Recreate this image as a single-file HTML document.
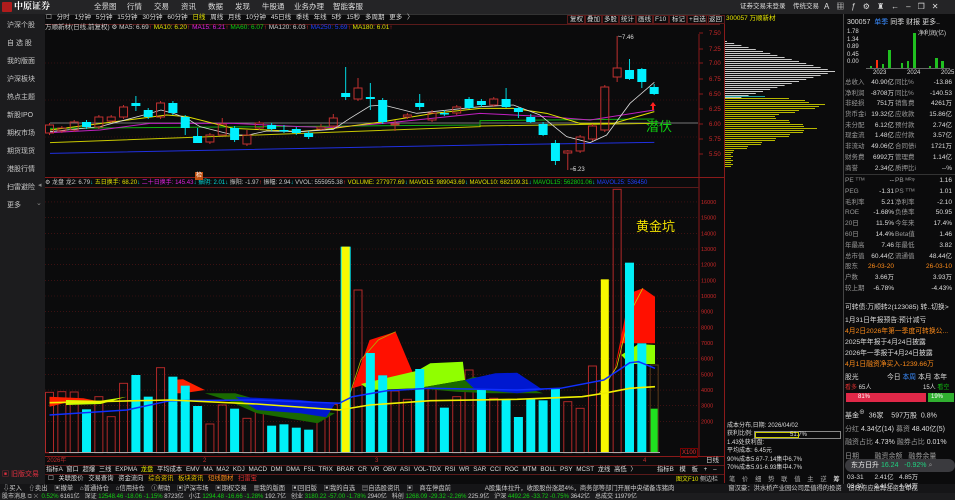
<!DOCTYPE html>
<html><head><meta charset="utf-8">
<style>
*{margin:0;padding:0;box-sizing:border-box}
body{width:955px;height:500px;overflow:hidden;background:#0b0b0c;font-family:"Liberation Sans","Noto Sans CJK SC",sans-serif;font-size:7px;color:#ccc;position:relative}
.a{position:absolute;white-space:nowrap;line-height:1}
#top{position:absolute;left:0;top:0;width:955px;height:14px;background:#242426}
#side{position:absolute;left:0;top:14px;width:45px;height:486px;background:#1c1c1e}
.si{position:absolute;left:7px;font-size:7px;color:#c8c8c8}
.tb{position:absolute;top:15px;height:9px;font-size:6.5px;color:#ddd;border:1px solid #5a1a1a;padding:0 2px;line-height:8px}
.rp{position:absolute;font-size:7px;color:#ddd;white-space:nowrap}
.g{color:#999}
.o{color:#ff8c1a}
svg{position:absolute;left:0;top:0}
</style></head><body>
<div id="top"></div>
<div class="a" style="left:2px;top:2px;width:10px;height:10px;background:#b01c1c;border-radius:1px"></div>
<div class="a" style="left:14px;top:2px;font-size:9px;color:#fff;font-weight:bold;font-family:'Liberation Serif','Noto Serif CJK SC',serif">中原证券</div>
<div class="a" style="left:94px;top:3px;font-size:7.5px;color:#ddd">全景图</div>
<div class="a" style="left:127px;top:3px;font-size:7.5px;color:#ddd">行情</div>
<div class="a" style="left:154px;top:3px;font-size:7.5px;color:#ddd">交易</div>
<div class="a" style="left:181px;top:3px;font-size:7.5px;color:#ddd">资讯</div>
<div class="a" style="left:208px;top:3px;font-size:7.5px;color:#ddd">数据</div>
<div class="a" style="left:235px;top:3px;font-size:7.5px;color:#ddd">发现</div>
<div class="a" style="left:262px;top:3px;font-size:7.5px;color:#ddd">牛股通</div>
<div class="a" style="left:294px;top:3px;font-size:7.5px;color:#ddd">业务办理</div>
<div class="a" style="left:333px;top:3px;font-size:7.5px;color:#ddd">智能客服</div>
<div class="a" style="left:740px;top:4px;font-size:6.5px;color:#ddd">证券交易未登录</div>
<div class="a" style="left:793px;top:4px;font-size:6.5px;color:#ddd">传统交易</div>
<div class="a" style="left:824px;top:3px;font-size:8px;color:#ddd;letter-spacing:7px">A▦ƒ⚙♜←–❐✕</div>

<div id="side"></div>
<div class="si" style="top:20px">沪深个股</div>
<div class="si" style="top:38px">自 选 股</div>
<div class="si" style="top:56px">我的版面</div>
<div class="si" style="top:74px">沪深板块</div>
<div class="si" style="top:92px">热点主题</div>
<div class="si" style="top:110px">新股IPO</div>
<div class="si" style="top:128px">期权市场</div>
<div class="si" style="top:146px">期货现货</div>
<div class="si" style="top:164px">港股行情</div>
<div class="si" style="top:182px">扫雷避险</div>
<div class="si" style="top:200px">更多</div>
<div class="a" style="left:38px;top:182px;color:#888">◂</div>
<div class="a" style="left:36px;top:200px;color:#888">⌄</div>
<div class="a" style="left:2px;top:471px;color:#e03040;font-size:7px">▣ 旧版交易</div>

<svg id="sv" width="955" height="500"></svg>

<div class="a" style="left:46px;top:15px;font-size:6.5px;color:#ddd;word-spacing:3px">☐ 分时 1分钟 5分钟 15分钟 30分钟 60分钟 <span style="color:#e8e800">日线</span> 周线 月线 10分钟 45日线 季线 年线 5秒 15秒 多周期 更多 〉</div>
<div class="tb" style="left:567px">复权</div><div class="tb" style="left:584px">叠加</div><div class="tb" style="left:601px">多股</div><div class="tb" style="left:618px">统计</div><div class="tb" style="left:635px">画线</div><div class="tb" style="left:652px">F10</div><div class="tb" style="left:669px">标记</div><div class="tb" style="left:686px">+自选</div><div class="tb" style="left:706px">返回</div>
<div class="a" style="left:726px;top:16px;font-size:6.5px;color:#e8e800">300057 万顺新材</div>
<div class="a" style="left:45px;top:25px;font-size:6.5px;color:#ccc">万顺新材(日线,前复权) ⚙ MA5: 6.69<span style="color:#f33">↑</span> <span style="color:#e0e000">MA10: 6.20<span style="color:#f33">↑</span></span> <span style="color:#e020e0">MA15: 6.21<span style="color:#f33">↑</span></span> <span style="color:#10d010">MA60: 6.07<span style="color:#f33">↑</span></span> <span style="color:#ccc">MA120: 6.03<span style="color:#f33">↑</span></span> <span style="color:#2040ff">MA250: 5.69<span style="color:#f33">↑</span></span> <span style="color:#e0e000">MA180: 6.01<span style="color:#f33">↑</span></span></div>
<div class="a" style="left:45px;top:180px;font-size:6px;color:#ccc">⚙ 龙盘 龙2: 6.79<span style="color:#0dd">↓</span> <span style="color:#e0e000">五日换手: 68.20<span style="color:#0dd">↓</span></span> <span style="color:#e020e0">二十日换手: 145.43<span style="color:#0dd">↓</span></span> <span style="color:#0dd">振阴: 2.01↓</span> 振阳: -1.97<span style="color:#f33">↑</span> 振幅: 2.94<span style="color:#0dd">↓</span> VVOL: 555955.38<span style="color:#f33">↑</span> <span style="color:#e0e000">VOLUME: 277977.69<span style="color:#0dd">↓</span> MAVOL5: 989043.69<span style="color:#0dd">↓</span> MAVOL10: 682109.31<span style="color:#0dd">↓</span></span> <span style="color:#10d010">MAVOL15: 562801.06<span style="color:#0dd">↓</span></span> <span style="color:#2040ff">MAVOL25: 536450</span></div>
<div class="a" style="left:622px;top:35px;font-size:6px;color:#ddd">7.46</div>
<div class="a" style="left:573px;top:167px;font-size:6px;color:#ddd">5.23</div>
<div class="a" style="left:646px;top:120px;font-size:13px;color:#10d010">潜伏</div>
<div class="a" style="left:636px;top:220px;font-size:13px;color:#f0e000">黄金坑</div>
<div class="a" style="left:195px;top:172px;font-size:6px;color:#fff;background:#c05010;padding:1px">检</div>
<div class="a" style="left:680px;top:448px;font-size:6px;color:#e03030;border:1px solid #700;padding:1px">X100</div>
<div class="a" style="left:47px;top:458px;font-size:6px;color:#c03030">2026年</div>
<div class="a" style="left:203px;top:458px;font-size:6px;color:#c03030">2</div>
<div class="a" style="left:375px;top:458px;font-size:6px;color:#c03030">3</div>
<div class="a" style="left:643px;top:458px;font-size:6px;color:#c03030">4</div>
<div class="a" style="left:706px;top:458px;font-size:6.5px;color:#ddd">日线</div>
<div class="a" style="left:46px;top:467px;font-size:6.3px;color:#ddd;word-spacing:2px">指标A 窗口 超爆 三线 EXPMA <span style="color:#e8e800">龙盘</span> 平均成本 EMV MA MA2 KDJ MACD DMI DMA FSL TRIX BRAR CR VR OBV ASI VOL-TDX RSI WR SAR CCI ROC MTM BOLL PSY MCST 龙线 高低 〉</div>
<div class="a" style="left:657px;top:467px;font-size:6.3px;color:#ddd;word-spacing:4px">指标B 模 板 + –</div>
<div class="a" style="left:48px;top:476px;font-size:6.3px;color:#ddd;word-spacing:3px">☐ 关联股价 交易查询 资金流向 <span style="color:#e8c000">综合资讯 板块资讯</span> <span style="color:#ff8c1a">短线题材</span> <span style="color:#e03030">扫雷宝</span></div>
<div class="a" style="left:676px;top:477px;font-size:6px;color:#e8e800">图文F10 <span style="color:#ccc">侧边栏</span></div>
<div class="a" style="left:729px;top:477px;font-size:6.3px;color:#aaa;word-spacing:5px">笔 价 细 势 联 值 主 逆 <span style="color:#fff">筹</span></div>
<div class="a" style="left:0;top:484px;width:955px;height:9px;background:#151517"></div>
<div class="a" style="left:3px;top:486px;font-size:6.3px;color:#ccc;word-spacing:5px">⇩买入 ⇧卖出 ▣撤单 ⌂普通持仓 ⌂信用持仓 ⓘ帮助 ▣沪深市场 ▣期权交易 ▦我的版面 ▣回旧版 ▣我的自选 ▤自选股资讯 ▣ 商在停盘前 &nbsp;&nbsp;&nbsp;&nbsp;A股集体拉升，收股股份涨超4%，商务部等部门开展中央储备冻猪肉 &nbsp;&nbsp;&nbsp;&nbsp;&nbsp;&nbsp; 窗汉豪：洪水桥产业园公司是值得的投资 但政府应推再注资金审视 &nbsp;&nbsp;&nbsp;&nbsp; 特朗普怒马</div>
<div class="a" style="left:0;top:493px;width:955px;height:7px;background:#1c1c1e"></div>
<div class="a" style="left:2px;top:494px;font-size:6px;color:#ccc">股市消息 <span style="color:#888">⧉ ✕</span> &nbsp;<span style="color:#10d010">0.52%</span> 6161亿 &nbsp; 深证 <span style="color:#10d010">12548.46 -18.06 -1.15%</span> 8723亿 &nbsp; 小江 <span style="color:#10d010">1294.48 -16.66 -1.28%</span> 192.7亿 &nbsp; 创业 <span style="color:#10d010">3180.22 -57.00 -1.78%</span> 2940亿 &nbsp; 科创 <span style="color:#10d010">1268.09 -29.32 -2.26%</span> 225.9亿 &nbsp; 沪深 <span style="color:#10d010">4492.26 -33.72 -0.75%</span> 3642亿 &nbsp; 总成交 11979亿</div>

<div class="a" style="left:727px;top:422px;font-size:6px;color:#ddd;line-height:8.4px">成本分布,日期: 2026/04/02<br>获利比例:<br>1.43处获利盘:<br>平均成本: 6.45元<br>90%成本5.67-7.14集中6.7%<br>70%成本5.91-6.93集中4.7%</div>
<div class="a" style="left:754px;top:431px;width:87px;height:8px;border:1px solid #888"></div>
<div class="a" style="left:755px;top:432px;width:44px;height:6px;border:1px solid #cc0"></div>
<div class="a" style="left:790px;top:432px;font-size:6px;color:#ddd">51.7%</div>

<div class="rp" style="left:847px;top:17px">300057 <span style="color:#3a8cff">&nbsp;单季</span> 同季 财报 更多..</div>
<div class="rp g" style="left:847px;top:29px;font-size:6px;line-height:7.5px;color:#ddd">1.78<br>1.34<br>0.89<br>0.45<br>0.00</div>
<div class="rp" style="left:918px;top:28px;font-size:6px">净利润(亿)</div>
<div class="rp" style="left:873px;top:70px;font-size:6px;word-spacing:19px">2023 2024 2025</div>
<div id="fin" class="rp" style="left:845px;top:78px;width:108px;font-size:6.5px;line-height:10.7px"></div>
<div class="a" style="left:845px;top:174px;width:110px;height:1px;background:#333"></div>
<div id="fin2" class="rp" style="left:845px;top:176px;width:108px;font-size:6.5px;line-height:10.8px"></div>
<div class="rp" style="left:845px;top:302px;width:110px;font-size:6.8px;line-height:11px">
<div>可转债:万顺转2(123085) 转..切换&gt;</div>
<div style="margin-top:2px">1月31日年报预告:预计减亏</div>
<div class="o">4月2日2026年第一季度可转换公...</div>
<div>2025年年报于4月24日披露</div>
<div>2026年一季报于4月24日披露</div>
<div class="o">4月1日融资净买入-1239.66万</div>
<div style="margin-top:2px;position:relative;height:11px"><span>股光</span><span style="position:absolute;left:42px">今日 <span style="color:#3a8cff">本周</span> 本月 本年</span></div>
<div style="font-size:6px;position:relative;height:10px"><span style="color:#e03030">看多</span> 65人<span style="position:absolute;left:78px">15人 <span style="color:#10c010">看空</span></span></div>
</div>
<div class="a" style="left:846px;top:393px;width:80px;height:9px;background:#e02848;color:#fff;font-size:6px;line-height:9px;padding-left:12px">81%</div>
<div class="a" style="left:928px;top:393px;width:26px;height:9px;background:#30b030;color:#fff;font-size:6px;line-height:9px;padding-left:3px">19%</div>
<div class="rp" style="left:845px;top:407px;width:108px;font-size:7px;line-height:13.5px">
<div>基金<sup>⊕</sup> &nbsp;36家 &nbsp;&nbsp;&nbsp;597万股 &nbsp;0.8%</div>
<div><span class="g">分红</span> 4.34亿(14) <span class="g">募资</span> 48.40亿(5)</div>
<div><span class="g">融资占比</span> 4.73% <span class="g">融券占比</span> 0.01%</div>
<div class="g">日期 &nbsp;&nbsp;&nbsp;&nbsp;&nbsp;&nbsp;&nbsp;融资余额 &nbsp;&nbsp;融券余量</div>
</div>
<div class="a" style="left:845px;top:459px;width:110px;height:13px;background:#3a3a3e;border-radius:7px;font-size:7px;line-height:13px;color:#eee;padding-left:6px">东方日升 <span style="color:#20d080">16.24 &nbsp;&nbsp;-0.92%</span> <span style="color:#999">⌕</span></div>
<div class="rp" style="left:847px;top:473px;font-size:6.5px;line-height:9px">03-31 &nbsp;&nbsp;&nbsp;&nbsp;&nbsp;2.41亿 &nbsp;&nbsp;4.85万<br>03-30 &nbsp;&nbsp;&nbsp;&nbsp;&nbsp;2.41亿 &nbsp;&nbsp;4.94万</div>

<script>
var S='';
function r(x,y,w,h,f,s){S+='<rect x="'+x+'" y="'+y+'" width="'+w+'" height="'+h+'" fill="'+f+'"'+(s?' stroke="'+s+'" stroke-width="1"':'')+'/>';}
function l(x1,y1,x2,y2,c,w,d){S+='<line x1="'+x1+'" y1="'+y1+'" x2="'+x2+'" y2="'+y2+'" stroke="'+c+'" stroke-width="'+(w||1)+'"'+(d?' stroke-dasharray="'+d+'"':'')+'/>';}
function pl(pts,c,w){S+='<polyline points="'+pts.map(p=>p.join(',')).join(' ')+'" fill="none" stroke="'+c+'" stroke-width="'+(w||1)+'"/>';}
function pg(pts,f){S+='<polygon points="'+pts.map(p=>p.join(',')).join(' ')+'" fill="'+f+'"/>';}
function t(x,y,s,c,fs){S+='<text x="'+x+'" y="'+y+'" fill="'+c+'" font-size="'+(fs||6)+'" font-family="Liberation Sans">'+s+'</text>';}
l(45,14.5,720,14.5,'#333');
l(45,24.5,720,24.5,'#5a1a1a');
l(699,34,699,457,'#8a1a1a');
l(724.5,24,724.5,483,'#8a1a1a');
l(843.5,14,843.5,484,'#444');
l(45,177.5,724,177.5,'#8a1a1a');
l(45,187.5,699,187.5,'#5a1a1a');
l(45,456.5,724,456.5,'#8a1a1a');
l(45,465.5,724,465.5,'#5a1a1a');
l(45,474.5,724,474.5,'#5a1a1a');
var pa=[[7.50,33],[7.25,49],[7.00,63],[6.75,79],[6.50,94],[6.25,109],[6.00,124],[5.75,139],[5.50,154]];
pa.forEach(p=>{t(709,p[1]+2,p[0].toFixed(2),'#c82828',6);l(699,p[1],703,p[1],'#8a1a1a');});
[63,100,137].forEach(y=>l(45,y,699,y,'#5a1515',0.6,'1,2'));
function z1(a){return a.map(p=>[p[0]/3,p[1]/3]);}
function z2(a){return a.map(p=>[480+p[0]/3,p[1]/3]);}
pl([[50,123],[698,123]],'#9a9a9a',0.8);
pl(z1([[150,428],[1440,380]]).concat(z2([[0,378],[523,370]])),'#c8c800',1);
pl(z1([[150,460],[1440,435]]).concat(z2([[0,435],[523,427]])),'#2030e0',1);
pl(z1([[150,385],[1440,375]]).concat(z2([[0,362],[523,357]])),'#10b010',1);
pl(z1([[150,398],[300,390],[450,370],[700,370],[900,380],[1000,382],[1150,370],[1440,340]]).concat(z2([[200,350],[330,360],[523,330]])),'#c020c0',1);
pl(z1([[150,390],[500,345],[560,350],[700,385],[900,395],[1000,385],[1150,365],[1300,340],[1440,325]]).concat(z2([[100,325],[200,340],[300,370],[400,370],[523,335]])),'#e0e000',1);
pl(z1([[150,395],[300,380],[450,340],[483,330],[520,340],[560,355],[600,380],[700,405],[745,405],[800,393],[900,395],[1000,388],[1050,355],[1110,318],[1150,315],[1250,340],[1440,320]]).concat(z2([[0,320],[100,315],[180,345],[260,410],[330,428],[380,405],[450,310],[523,247]])),'#ddd',0.8);
var C=[['u',125,133],['u',128,131],['u',122,130],['d',122,127],['u',117,127],['u',117,121],['u',107,117],['d',103,106,96,111],['d',110,117],['u',103,117],['d',103,113],['d',117,128,115,135],['d',136,143,128,143],['u',135,142],['u',124,135,118,135],['d',128,140],['u',135,144,130,146],['u',123,128],['d',125,129],['d',130,131,125,133],['d',129,133],['d',133,137],['u',127,129,124,130],['u',118,126,114,128],['d',93,97,67,100],['u',88,99,78,101],['d',97,99,83,110],['d',100,122],['u',124,125,120,131],['u',115,117],['d',103,107,94,110],['u',113,120,110,122],['d',113,114,110,116],['u',107,113],['d',99,108,97,109],['d',101,105],['u',99,105],['d',99,107,88,108],['d',108,112,107,118],['d',117,122,114,123],['d',124,135,122,136],['d',143,161,140,165],['u',151,153,150,170],['u',137,151],['u',126,139],['u',87,130],['u',68,77,36,82],['d',70,79,59,80],['d',69,82,68,88],['d',87,94,84,95]];
C.forEach((c,i)=>{var x=49.5+12.34*i;var wt=c[3]||c[1]-2,wb=c[4]||c[2]+2;
 if(c[0]=='u'){l(x,wt,x,c[1],'#c03030');l(x,c[2],x,wb,'#c03030');r(x-4,c[1],8,Math.max(1,c[2]-c[1]),'none','#c03030');}
 else{l(x,wt,x,wb,'#00d8e0');r(x-4.5,c[1],9,Math.max(1.5,c[2]-c[1]),'#00f0ff');}});
l(618,36,622,37,'#ddd',0.6);l(570,169,575,169,'#ddd',0.6);
pg([[653,102],[650,106],[652,106],[652,110],[654,110],[654,106],[656,106]],'#ff2020');
for(var y=37;y<=97;y+=2){var d=Math.abs(y-71);var L=Math.max(8,118-d*3.6)+(y%4?-8:0);r(725,y,L,1,'#c8c8c8');}
r(725,96,40,1,'#20a0a0');
for(var y=98;y<=167;y+=2){var d1=Math.abs(y-105),d2=Math.abs(y-128);var L=Math.max(105-d1*5,92-d2*3.5,8)+(y%4?-6:0);r(725,y,Math.max(6,L),1,'#b8b800');}
for(var k=2;k<=16;k++){var yy=452.7-(k*1000)*0.01567;t(701,yy+2,k*1000,'#c82828',5.5);l(45,yy,699,yy,'#5a1515',0.6,'1,2');}
function v(a){return a.map(p=>[(40+p[0]*0.4337).toFixed(1),(180+p[1]/3).toFixed(1)]);}
var VB={0:['h',637],1:['h',635],2:['h',636],3:['c',688],4:['h',650],5:['h',710],6:['h',610],7:['c',585],8:['c',650],9:['h',563],10:['c',590],11:['c',617],12:['c',678],13:['h',732],14:['h',675],15:['c',686],16:['h',715],17:['h',683],18:['c',737],19:['c',733],20:['c',743],21:['c',749],22:['h',703],23:['h',673],24:['y',200],25:['h',330],26:['c',519],27:['c',586],28:['h',633],29:['h',658],30:['c',567],31:['h',622],32:['c',683],33:['h',650],34:['h',570],35:['c',628],36:['h',655],37:['c',660],38:['c',711],39:['c',657],40:['c',661],41:['c',627],42:['h',665],43:['h',685],44:['h',558],45:['y',298],46:['h',28],47:['c',248],48:['c',490],49:['g',686]};
function bars(pass){
for(var i=0;i<50;i++){var b=VB[i];var x=49.5+12.34*i;var tp=180+b[1]/3;var h=452.7-tp;
 if(pass==0){
 if(b[0]=='h')r(x-4,tp,8,h,'none','#b02828');
 else if(b[0]=='g'){r(x-4,180+555/3,8,452.7-180-555/3,'none','#5a3a1a');}
 } else {
 if(b[0]=='c')r(x-4.5,tp,9,h,'#00f0f8');
 else if(b[0]=='y'){if(i==24)r(x-5,tp,10,h,'#00f0f8');r(x-4,tp,8,h,'#f8f800');}
 else if(b[0]=='g')r(x-3.5,tp,7,h,'#20e020');
 }}}
bars(0);
pg(v([[22,650],[100,655],[140,665],[60,668],[22,680]]),'#ff2000');
pg(v([[60,660],[140,662],[200,650],[140,672],[60,675]]),'#ccff00');
pg(v([[300,600],[330,598],[380,630],[330,640],[300,640]]),'#ff2000');
pg(v([[380,640],[450,640],[560,680],[680,700],[640,730],[500,700],[430,660]]),'#1a6a00');
pg(v([[450,650],[600,660],[680,672],[660,712],[600,700],[500,690]]),'#0018d0');
pg(v([[720,625],[760,480],[820,455],[860,580],[760,610]]),'#ff1000');
pg(v([[740,612],[870,572],[900,550],[975,545],[980,600],[870,625],[760,630]]),'#90ff00');
pg(v([[870,625],[980,600],[1000,590],[1090,610],[1160,640],[1040,640],[960,635]]),'#1a6a00');
pg(v([[980,600],[1050,580],[1100,578],[1160,630],[1100,640],[1040,632],[1000,625]]),'#0018d0');
pg(v([[1320,600],[1360,340],[1390,325],[1418,350],[1418,490],[1340,490]]),'#ff1000');
pg(v([[1340,525],[1380,492],[1418,495],[1418,552],[1360,552]]),'#90ff00');
pl(v([[1290,640],[1330,560],[1360,400],[1390,325]]),'#d0d000',0.8);
pl(v([[700,700],[740,540],[780,480],[820,455]]),'#b0b000',0.8);
bars(1);
l(49,452.5,660,452.5,'#aaa',1);
pl(v([[22,705],[200,690],[300,662],[500,660],[690,670],[720,650],[800,632],[900,625],[1100,630],[1200,625],[1300,600],[1360,548],[1380,545],[1418,565]]),'#1030ff',1.5);
pl(v([[22,668],[300,660],[500,672],[690,690],[760,675],[900,662],[1100,658],[1250,650],[1300,640],[1360,625],[1418,620]]),'#f0f000',1.6);
var fb=[[870,66,'#20c020',2],[876,60,'#ff3010',2],[882,64,'#20c020',2],[888,50,'#20c020',3],[901,63,'#20c020',2],[907,61,'#20c020',2],[913,33,'#20c020',3],[929,66,'#20c020',2],[935,58,'#20c020',3],[941,61,'#20c020',3]];
fb.forEach(b=>r(b[0],b[1],b[3],68-b[1],b[2]));
l(866,68.5,950,68.5,'#666');
document.getElementById('sv').innerHTML=S;
var F=[['总收入','40.90亿','同比%','-13.86'],['净利润','-8708万','同比%','-140.53'],['非经损','751万','销售费','4261万'],['货币金i','19.32亿','应收款','15.86亿'],['未分配','6.12亿','预付款','2.74亿'],['现金流','1.48亿','应付款','3.57亿'],['非流动','49.06亿','合同债i','1721万'],['财务费','6992万','管理费','1.14亿'],['商誉','2.34亿','质押比i','--%']];
function rows(A,h){return A.map(a=>'<div style="position:relative;height:'+h+'px"><span class="g" style="position:absolute;left:0">'+a[0]+'</span><span style="position:absolute;right:59px">'+a[1]+'</span><span class="g" style="position:absolute;left:50px">'+a[2]+'</span><span style="position:absolute;right:1px">'+a[3]+'</span></div>').join('');}
document.getElementById('fin').innerHTML=rows(F,10.7);
var F2=[['PE ᵀᵀᴹ','--','PB ᴹᴿᵠ','1.16'],['PEG','-1.31','PS ᵀᵀᴹ','1.01'],['毛利率','5.21','净利率','-2.10'],['ROE','-1.68%','负债率','50.95'],['20日','11.5%','今年来','17.4%'],['60日','14.4%','Beta值','1.46'],['年最高','7.46','年最低','3.82'],['总市值','60.44亿','流通值','48.44亿'],['股东','<span class=o>26-03-20</span>','','<span class=o>26-03-10</span>'],['户数','3.66万','','3.93万'],['较上期','-6.78%','','-4.43%']];
document.getElementById('fin2').innerHTML=rows(F2,10.8);
</script>
</body></html>
